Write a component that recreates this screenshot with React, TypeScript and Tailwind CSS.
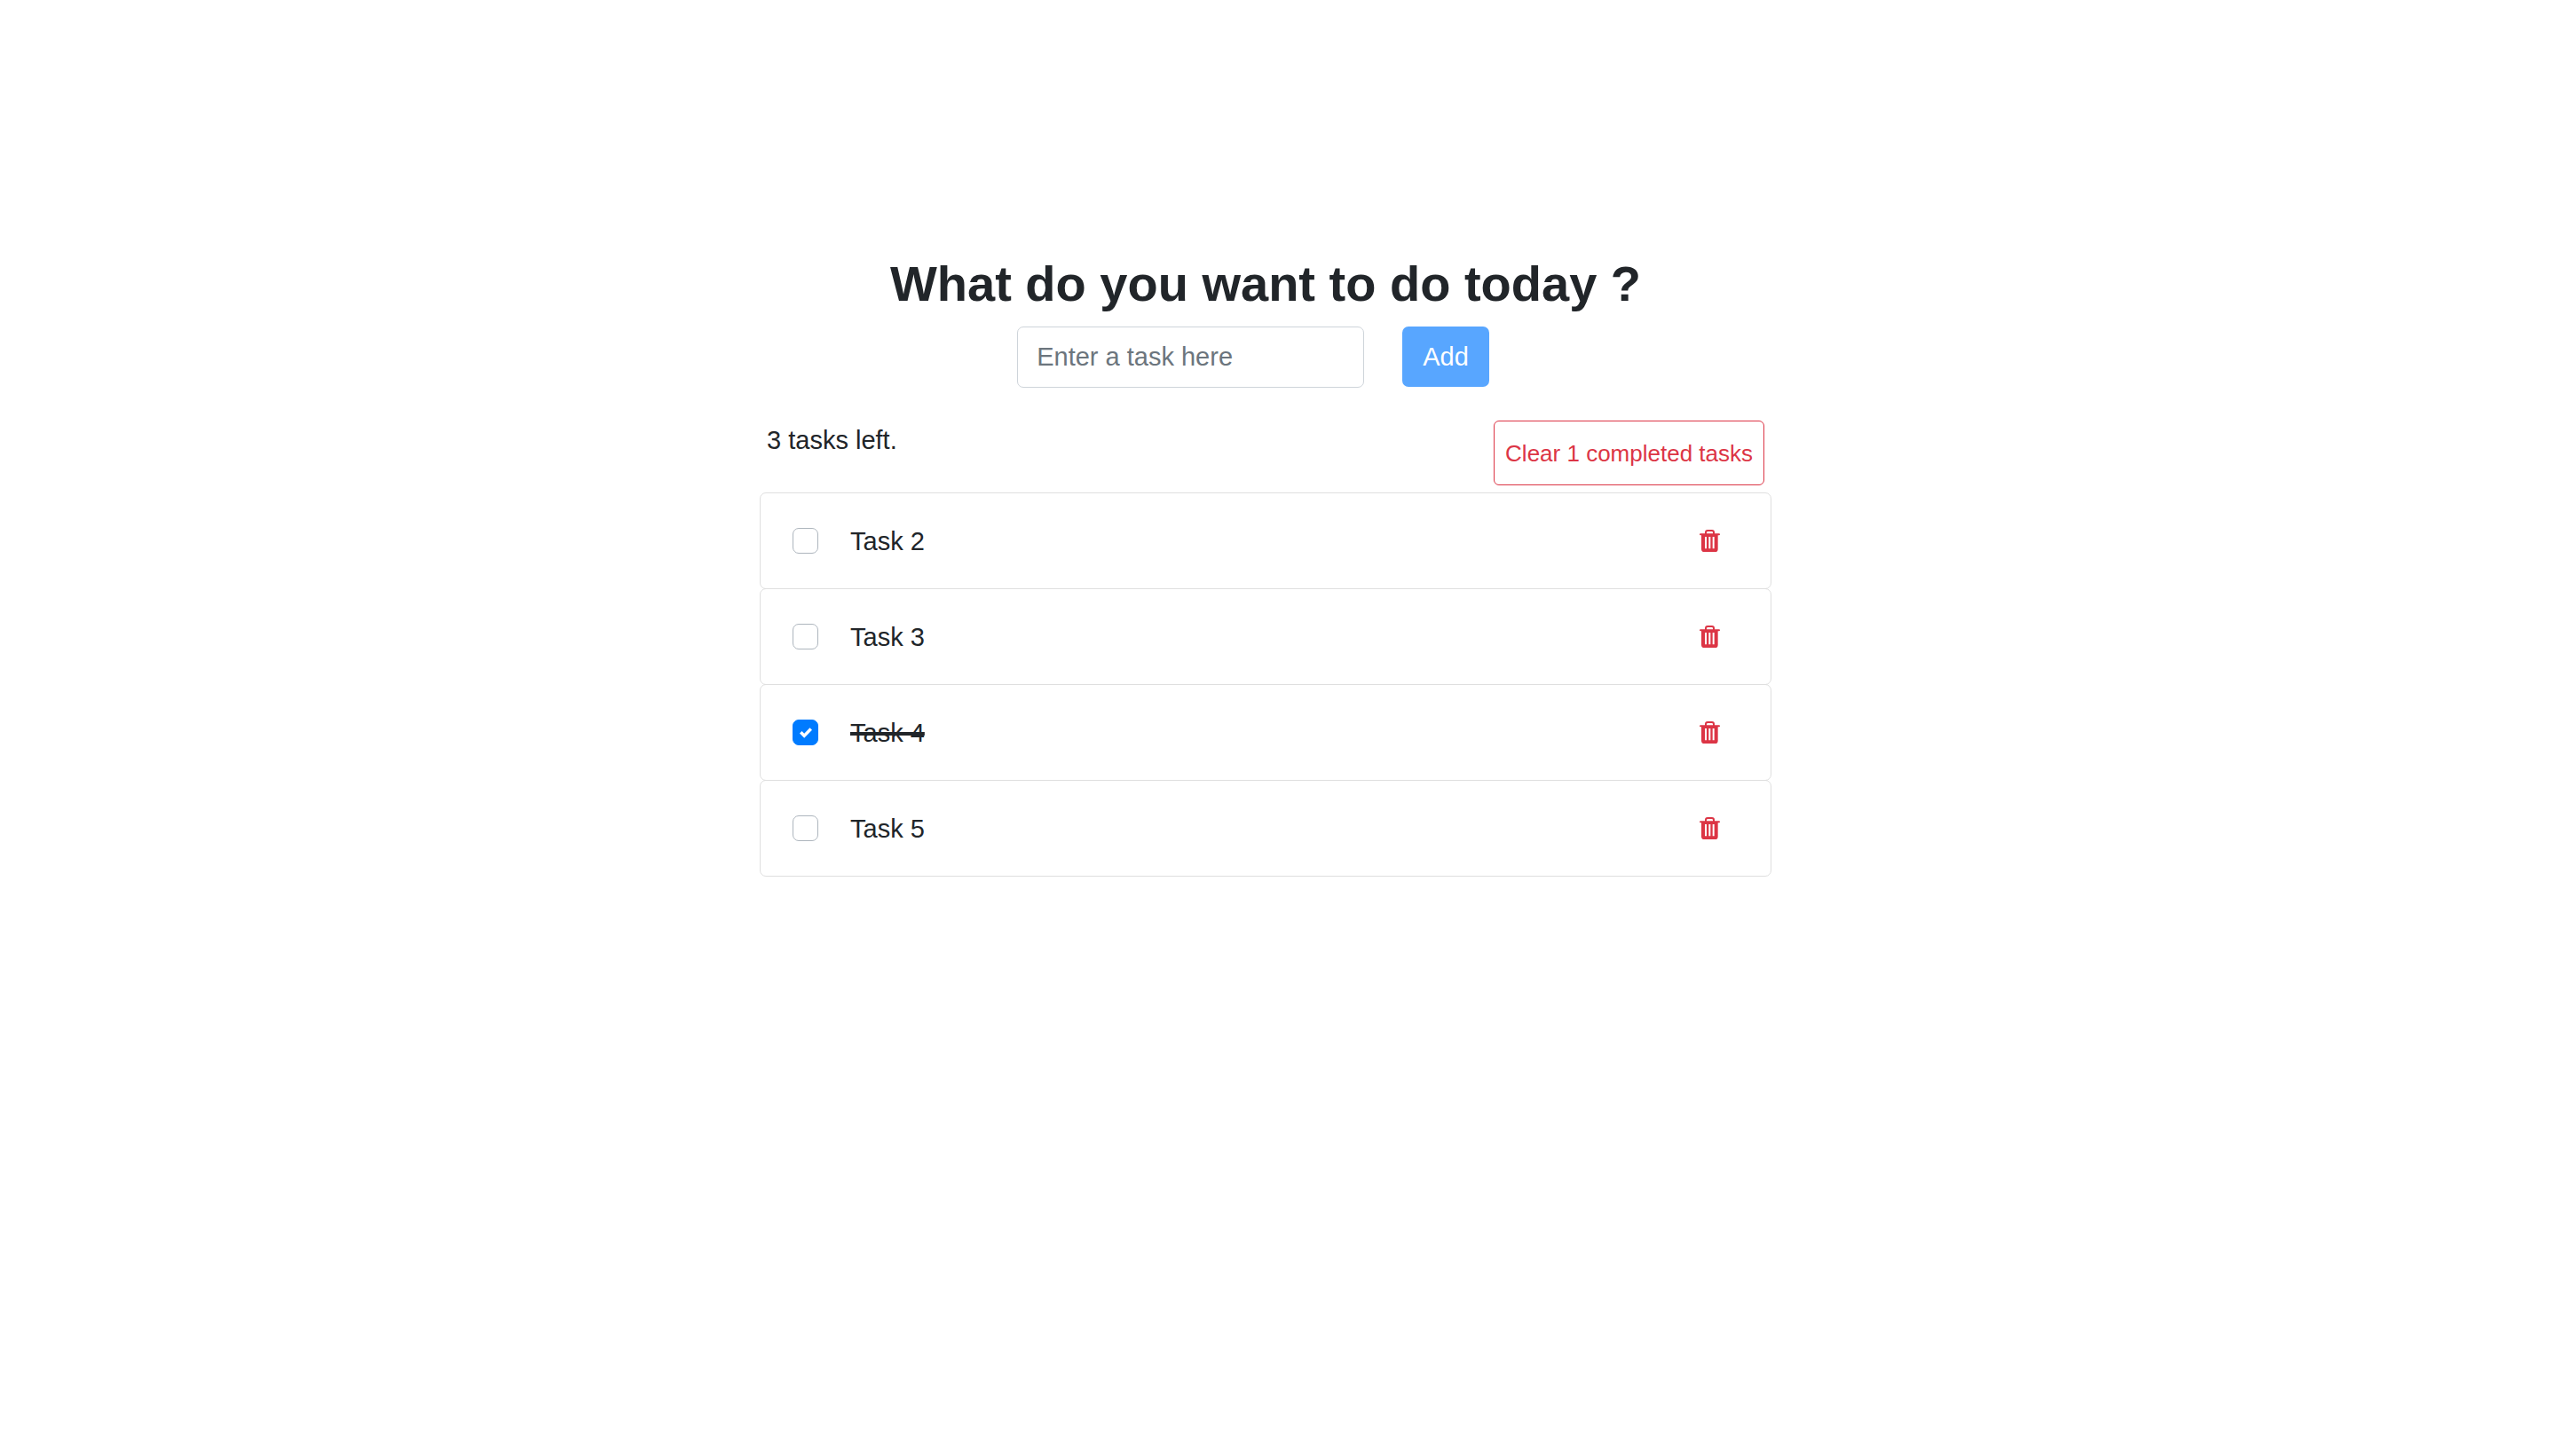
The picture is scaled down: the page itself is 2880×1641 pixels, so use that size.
import { useState } from "react";
import type { FormEvent } from "react";

type Task = { id: number; name: string; done: boolean };

const initialTasks: Task[] = [
  { id: 2, name: "Task 2", done: false },
  { id: 3, name: "Task 3", done: false },
  { id: 4, name: "Task 4", done: true },
  { id: 5, name: "Task 5", done: false },
];

function TrashIcon() {
  return (
    <svg className="h-[25px] w-[23px]" viewBox="0 0 69 75" fill="currentColor" aria-hidden="true">
      <path
        fillRule="evenodd"
        d="M18 13V9Q18 0 27 0H42Q51 0 51 9V13H66Q69 13 69 16T66 19H62V65Q62 75 53 75H16Q6 75 6 65V19H3Q0 19 0 16T3 13ZM24 13H45V10Q45 6 41 6H28Q24 6 24 10ZM18 24V64H24V24ZM31 24V64H37V24ZM44 24V64H50V24Z"
      />
    </svg>
  );
}

function TaskRow({ task, onToggle, onDelete }: { task: Task; onToggle: () => void; onDelete: () => void }) {
  const id = `task-${task.id}`;
  return (
    <li className="-mt-px flex h-[109px] items-center rounded-[7px] border border-[#dfdfdf] pr-[57px] pl-9 first:mt-0">
      <span className="relative flex">
        <input
          id={id}
          type="checkbox"
          checked={task.done}
          onChange={onToggle}
          className="size-[29px] appearance-none rounded-[7px] border border-[#adb5bd] bg-white checked:border-[#007bff] checked:bg-[#007bff]"
        />
        {task.done && (
          <svg
            className="pointer-events-none absolute inset-0 m-auto size-[14px]"
            viewBox="0 0 8 8"
            fill="#fff"
            aria-hidden="true"
          >
            <path d="M6.564.75l-3.59 3.612-1.538-1.55L0 4.26l2.974 2.99L8 2.193z" />
          </svg>
        )}
      </span>
      <label htmlFor={id} className={task.done ? "ml-9 line-through decoration-4" : "ml-9"}>
        {task.name}
      </label>
      <button type="button" aria-label={`Delete ${task.name}`} onClick={onDelete} className="ml-auto text-[#dc3545]">
        <TrashIcon />
      </button>
    </li>
  );
}

export default function App() {
  const [tasks, setTasks] = useState(initialTasks);
  const [text, setText] = useState("");
  const done = tasks.filter((t) => t.done).length;

  const addTask = (e: FormEvent) => {
    e.preventDefault();
    if (!text.trim()) return;
    setTasks([...tasks, { id: Date.now(), name: text.trim(), done: false }]);
    setText("");
  };

  return (
    <div className="min-h-screen bg-white pt-[286px] pr-7 font-['Liberation_Sans',Arial,sans-serif] text-[29px] leading-[44px] text-[#212529]">
      <main className="mx-auto max-w-[1140px]">
        <h1 className="text-center text-[56px] leading-[68px] font-bold">What do you want to do today ?</h1>
        <form onSubmit={addTask} className="mt-[14px] flex justify-center gap-[43px] pr-7">
          <input
            type="text"
            aria-label="New task"
            placeholder="Enter a task here"
            value={text}
            onChange={(e) => setText(e.target.value)}
            className="h-[69px] w-[391px] rounded-[7px] border border-[#ced4da] px-[21px] placeholder:text-[#6c757d]"
          />
          <button type="submit" className="h-[68px] rounded-[7px] bg-[#58a6ff] px-[23px] text-white">
            Add
          </button>
        </form>
        <div className="mt-[37px] mb-2 flex items-start justify-between px-2">
          <p>{tasks.length - done} tasks left.</p>
          <button
            type="button"
            onClick={() => setTasks(tasks.filter((t) => !t.done))}
            className="h-[73px] rounded-[6px] border border-[#dc3545] px-3 text-[26px] text-[#dc3545]"
          >
            Clear {done} completed tasks
          </button>
        </div>
        <ul>
          {tasks.map((task) => (
            <TaskRow
              key={task.id}
              task={task}
              onToggle={() => setTasks(tasks.map((t) => (t.id === task.id ? { ...t, done: !t.done } : t)))}
              onDelete={() => setTasks(tasks.filter((t) => t.id !== task.id))}
            />
          ))}
        </ul>
      </main>
    </div>
  );
}
